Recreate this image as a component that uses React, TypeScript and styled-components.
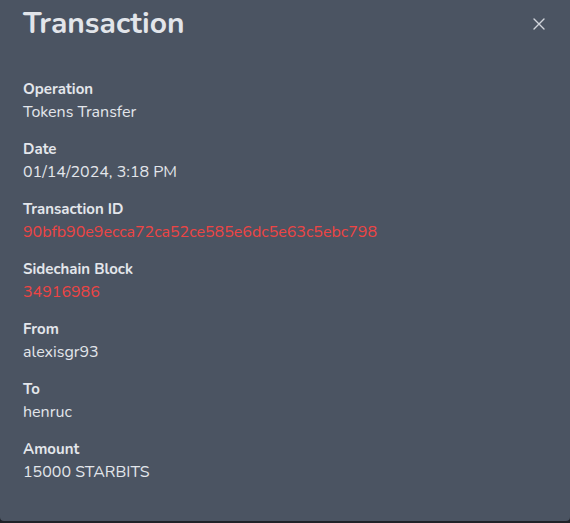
import styled, { createGlobalStyle } from 'styled-components';

const GlobalStyle = createGlobalStyle`
  html, body {
    margin: 0;
    padding: 0;
    background: #1f2228;
  }
  body {
    font-family: Nunito, Lato, "Noto Sans", sans-serif;
  }
`;

const Modal = styled.div`
  width: 570px;
  height: 521px;
  box-sizing: border-box;
  background: #4b5462;
  border-radius: 0 0 4px 4px;
  padding: 6px 23px 0;
  color: #e5e7eb;
`;

const Header = styled.header`
  display: flex;
  align-items: flex-start;
  justify-content: space-between;
`;

const Title = styled.h2`
  margin: 0;
  font-size: 30px;
  line-height: 36px;
  font-weight: 700;
  color: #e2e5ea;
`;

const CloseButton = styled.button`
  margin: 10px 0 0 0;
  padding: 0;
  width: 16px;
  height: 16px;
  border: none;
  background: none;
  color: #d1d5db;
  cursor: pointer;
  display: flex;
  align-items: center;
  justify-content: center;
`;

const List = styled.dl`
  margin: 36px 0 0;
  display: flex;
  flex-direction: column;
  gap: 14px;
`;

const Field = styled.div`
  display: flex;
  flex-direction: column;
`;

const Label = styled.dt`
  font-size: 15px;
  line-height: 23px;
  font-weight: 700;
  color: #e3e6eb;
`;

const Value = styled.dd<{ $link?: boolean }>`
  margin: 0;
  font-size: 16px;
  line-height: 23px;
  color: ${p => (p.$link ? '#ef4444' : '#e3e6eb')};
`;

const fields: { label: string; value: string; link?: boolean }[] = [
  { label: 'Operation', value: 'Tokens Transfer' },
  { label: 'Date', value: '01/14/2024, 3:18 PM' },
  {
    label: 'Transaction ID',
    value: '90bfb90e9ecca72ca52ce585e6dc5e63c5ebc798',
    link: true,
  },
  { label: 'Sidechain Block', value: '34916986', link: true },
  { label: 'From', value: 'alexisgr93' },
  { label: 'To', value: 'henruc' },
  { label: 'Amount', value: '15000 STARBITS' },
];

export default function App() {
  return (
    <>
      <GlobalStyle />
      <Modal>
        <Header>
          <Title>Transaction</Title>
          <CloseButton aria-label="Close">
            <svg width="12" height="12" viewBox="0 0 12 12" fill="none">
              <path
                d="M1 1L11 11M11 1L1 11"
                stroke="currentColor"
                strokeWidth="1.4"
                strokeLinecap="round"
              />
            </svg>
          </CloseButton>
        </Header>
        <List>
          {fields.map(f => (
            <Field key={f.label}>
              <Label>{f.label}</Label>
              <Value $link={f.link}>{f.value}</Value>
            </Field>
          ))}
        </List>
      </Modal>
    </>
  );
}
